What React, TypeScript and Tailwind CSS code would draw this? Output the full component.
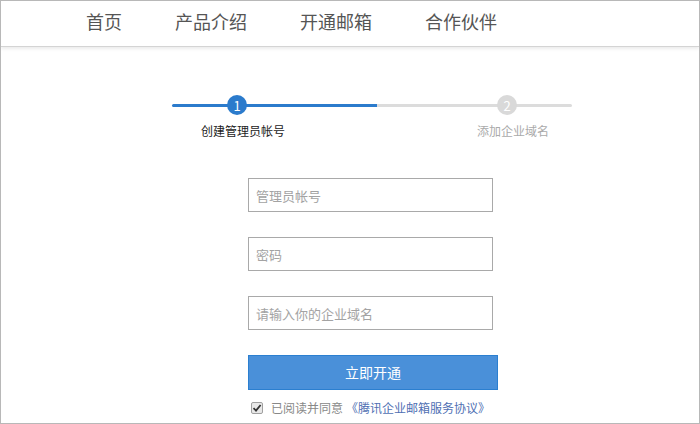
import React from 'react';

const NAV = ['首页', '产品介绍', '开通邮箱', '合作伙伴'];

const font = { fontFamily: '"Noto Sans CJK SC", "Noto Sans", sans-serif' };

function Field({ placeholder, type = 'text' }: { placeholder: string; type?: string }) {
  return (
    <input
      type={type}
      placeholder={placeholder}
      className="box-border block h-[34px] w-[245px] border border-[#a9a9a9] bg-white px-[7px] text-[13px] text-[#333] placeholder:text-[#a3a3a3] outline-none"
      style={font}
    />
  );
}

export default function App() {
  return (
    <div
      className="box-border h-[424px] w-[700px] overflow-hidden border border-[#b8b8b8] bg-white"
      style={font}
    >
      {/* top nav */}
      <div className="flex h-[46px] items-center border-b border-[#d4d4d4] pb-[6px] pl-[85px] shadow-[0_2px_3px_rgba(0,0,0,0.08)]">
        {NAV.map((item, i) => (
          <a
            key={item}
            className={`text-[18px] leading-none text-[#555] ${i > 0 ? 'ml-[53px]' : ''}`}
          >
            {item}
          </a>
        ))}
      </div>

      {/* steps */}
      <div className="ml-[171px] mt-[48px] w-[400px]">
        <div className="relative h-[20px]">
          <div className="flex h-full items-center">
            <div className="h-[3px] w-[205px] rounded-l-full bg-[#2b7bcc]" />
            <div className="h-[3px] flex-1 rounded-r-full bg-[#dcdcdc]" />
          </div>
          <span className="absolute left-[55px] top-0 flex h-[20px] w-[20px] items-center justify-center rounded-full bg-[#2b7bcc] text-[13px] leading-none text-white">
            1
          </span>
          <span className="absolute left-[325px] top-0 flex h-[20px] w-[20px] items-center justify-center rounded-full bg-[#d9d9d9] text-[13px] leading-none text-white">
            2
          </span>
        </div>
        <div className="mt-[8px] flex text-[12px] leading-[16px]">
          <span className="ml-[29px] text-[#222]">创建管理员帐号</span>
          <span className="ml-auto mr-[23px] text-[#aaa]">添加企业域名</span>
        </div>
      </div>

      {/* form */}
      <div className="ml-[247px] mt-[39px] flex flex-col">
        <Field placeholder="管理员帐号" />
        <div className="mt-[25px]">
          <Field placeholder="密码" type="password" />
        </div>
        <div className="mt-[25px]">
          <Field placeholder="请输入你的企业域名" />
        </div>
        <button
          className="mt-[25px] box-border h-[35px] w-[250px] border border-[#2b7fd0] bg-[#4a90d9] text-[14px] text-white"
          style={font}
        >
          立即开通
        </button>
        <div className="mt-[12px] flex items-center text-[12px] leading-none">
          <span className="ml-[3px] flex h-[12px] w-[12px] items-center justify-center rounded-[2px] border border-[#a0a0a0] bg-[#e8e8e8]">
            <svg width="10" height="10" viewBox="0 0 10 10">
              <path d="M1.5 5.2 L4 7.6 L8.6 2" fill="none" stroke="#333" strokeWidth="1.8" />
            </svg>
          </span>
          <span className="ml-[8px] text-[#888]">已阅读并同意</span>
          <a className="ml-[3px] text-[#4f6fb3]">《腾讯企业邮箱服务协议》</a>
        </div>
      </div>
    </div>
  );
}
